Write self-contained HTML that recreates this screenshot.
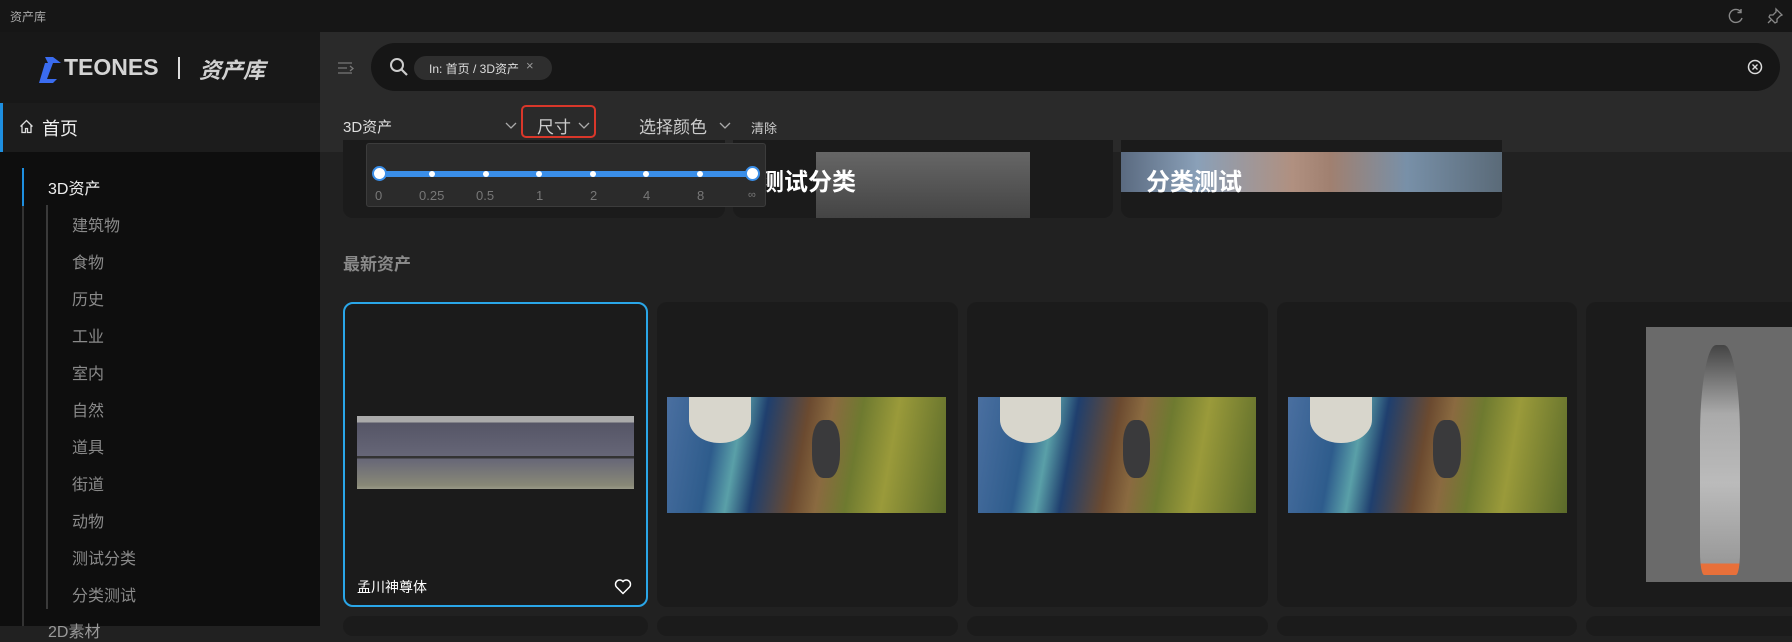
<!DOCTYPE html>
<html><head><meta charset="utf-8"><style>
*{margin:0;padding:0;box-sizing:border-box}
body{width:1792px;height:626px;overflow:hidden;background:#212121;font-family:"Liberation Sans","Noto Sans CJK SC",sans-serif;color:#ddd;position:relative}
.a{position:absolute}
.sub{position:absolute;left:72px;font-size:16px;color:#8a8a8a}
.card{position:absolute;background:#1b1b1b;border-radius:10px}
.bird{position:absolute;background:linear-gradient(100deg,#4a6fa0 0%,#2e5c8c 18%,#5aa0a8 26%,#1f3f6e 34%,#6b4a30 48%,#8a6a40 56%,#6e7a30 66%,#9a9a3a 78%,#5a6a2a 100%)}
.bird:before{content:"";position:absolute;left:8%;top:0;width:22%;height:40%;background:#d8d6cc;border-radius:0 0 50% 50%}
.bird:after{content:"";position:absolute;left:52%;top:20%;width:10%;height:50%;background:#3a3a3c;border-radius:40%}
</style></head><body>
<div class="a" style="left:0;top:0;width:1792px;height:32px;background:#161616"></div>
<div class="a" style="left:10px;top:8px;font-size:12px;color:#aaa">资产库</div>
<svg class="a" style="left:1727px;top:7px" width="18" height="18" viewBox="0 0 18 18"><path d="M14 5A6.5 6.5 0 1 0 15 11" fill="none" stroke="#888" stroke-width="1.4"/><path d="M14 2v3.5h-3.5" fill="none" stroke="#888" stroke-width="1.4"/></svg>
<svg class="a" style="left:1766px;top:7px" width="18" height="18" viewBox="0 0 18 18"><path d="M10 2l6 6-2 1-3 3 0 3-2 1-6-6 1-2 3 0 3-3z M5 13l-3 3" fill="none" stroke="#888" stroke-width="1.3"/></svg>
<div class="a" style="left:0;top:32px;width:320px;height:594px;background:#0e0e0e"></div>
<div class="a" style="left:0;top:32px;width:320px;height:120px;background:#181818"></div>
<div class="a" style="left:0;top:103px;width:320px;height:49px;background:#1c1c1c"></div>
<div class="a" style="left:0;top:103px;width:3px;height:49px;background:#1e8fe0"></div>
<svg class="a" style="left:37px;top:55px" width="26" height="28" viewBox="0 0 26 28"><path d="M2 8h9L8 2h8l8 6h-8l-6 16h10l-4 4H2l6-20H2z" fill="#3a6cf0"/></svg>
<div class="a" style="left:64px;top:54px;font-size:23px;font-weight:bold;color:#d4d4d4">TEONES</div>
<div class="a" style="left:178px;top:57px;width:2px;height:22px;background:#ddd"></div>
<div class="a" style="left:199px;top:53px;font-size:22px;font-weight:bold;font-style:italic;color:#d0d0d0">资产库</div>
<svg class="a" style="left:19px;top:119px" width="15" height="15" viewBox="0 0 15 15"><path d="M1.5 7.5L7.5 1.5l6 6M3 6v7.5h3.5V9.5h2v4H12V6" fill="none" stroke="#ddd" stroke-width="1.3"/></svg>
<div class="a" style="left:42px;top:115px;font-size:18px;color:#eee">首页</div>
<div class="a" style="left:22px;top:168px;width:2px;height:458px;background:#333"></div>
<div class="a" style="left:22px;top:168px;width:2px;height:38px;background:#1e8fe0"></div>
<div class="a" style="left:46px;top:205px;width:2px;height:404px;background:#3a3a3a"></div>
<div class="a" style="left:48px;top:175px;font-size:16px;color:#eee">3D资产</div>
<div class="sub" style="top:212px">建筑物</div>
<div class="sub" style="top:249px">食物</div>
<div class="sub" style="top:286px">历史</div>
<div class="sub" style="top:323px">工业</div>
<div class="sub" style="top:360px">室内</div>
<div class="sub" style="top:397px">自然</div>
<div class="sub" style="top:434px">道具</div>
<div class="sub" style="top:471px">街道</div>
<div class="sub" style="top:508px">动物</div>
<div class="sub" style="top:545px">测试分类</div>
<div class="sub" style="top:582px">分类测试</div>
<div class="a" style="left:48px;top:618px;font-size:16px;color:#999">2D素材</div>
<div class="a" style="left:320px;top:32px;width:1472px;height:120px;background:#2a2a2a"></div>
<svg class="a" style="left:337px;top:61px" width="18" height="16" viewBox="0 0 18 16"><path d="M1 2h14M1 7h9M1 12h14M13 5l3 2.5-3 2.5" fill="none" stroke="#777" stroke-width="1.3"/></svg>
<div class="a" style="left:371px;top:43px;width:1409px;height:48px;border-radius:24px;background:#161616"></div>
<svg class="a" style="left:389px;top:57px" width="20" height="20" viewBox="0 0 20 20"><circle cx="8" cy="8" r="6" fill="none" stroke="#ccc" stroke-width="2"/><path d="M12.5 12.5L18 18" stroke="#ccc" stroke-width="2.2"/></svg>
<div class="a" style="left:414px;top:56px;width:138px;height:24px;border-radius:12px;background:#2e2e2e"></div>
<div class="a" style="left:429px;top:60px;font-size:12px;color:#ddd">In: 首页 / 3D资产</div>
<div class="a" style="left:526px;top:58px;font-size:13px;color:#999">×</div>
<svg class="a" style="left:1747px;top:59px" width="16" height="16" viewBox="0 0 16 16"><circle cx="8" cy="8" r="6.5" fill="none" stroke="#ddd" stroke-width="1.5"/><path d="M5.5 5.5l5 5M10.5 5.5l-5 5" stroke="#ddd" stroke-width="1.4"/></svg>
<div class="a" style="left:343px;top:116px;font-size:15px;color:#ddd">3D资产</div>
<svg class="a" style="left:504px;top:121px" width="14" height="10" viewBox="0 0 14 10"><path d="M2 2l5 5 5-5" fill="none" stroke="#aaa" stroke-width="1.3"/></svg>
<div class="a" style="left:521px;top:105px;width:75px;height:33px;border:2px solid #d9372a;border-radius:5px"></div>
<div class="a" style="left:537px;top:113px;font-size:17px;color:#ccc">尺寸</div>
<svg class="a" style="left:577px;top:121px" width="14" height="10" viewBox="0 0 14 10"><path d="M2 2l5 5 5-5" fill="none" stroke="#aaa" stroke-width="1.3"/></svg>
<div class="a" style="left:639px;top:113px;font-size:17px;color:#ccc">选择颜色</div>
<svg class="a" style="left:718px;top:121px" width="14" height="10" viewBox="0 0 14 10"><path d="M2 2l5 5 5-5" fill="none" stroke="#aaa" stroke-width="1.3"/></svg>
<div class="a" style="left:751px;top:118px;font-size:13px;color:#ccc">清除</div>
<div class="card" style="left:343px;top:140px;width:382px;height:78px;border-radius:0 0 10px 10px"></div>
<div class="card" style="left:733px;top:140px;width:380px;height:78px;border-radius:0 0 10px 10px;overflow:hidden"><div class="a" style="left:83px;top:12px;width:214px;height:66px;background:linear-gradient(180deg,#666,#444)"></div><div class="a" style="left:27px;top:22px;font-size:24px;font-weight:bold;color:#fff">测试分类</div></div>
<div class="card" style="left:1121px;top:140px;width:381px;height:78px;border-radius:0 0 10px 10px;overflow:hidden"><div class="a" style="left:0;top:12px;width:381px;height:40px;background:linear-gradient(90deg,#5a6a80,#8aa0b8 20%,#b09080 45%,#a08070 55%,#7890a8 75%,#5a6a78)"></div><div class="a" style="left:25px;top:22px;font-size:24px;font-weight:bold;color:#fff">分类测试</div></div>
<div class="a" style="left:366px;top:143px;width:400px;height:64px;background:#2b2b2b;border:1px solid #3c3c3c;border-radius:3px"></div>
<div class="a" style="left:379px;top:171px;width:374px;height:6px;background:#3a8ee8;border-radius:3px"></div>
<div class="a" style="left:372px;top:166px;width:15px;height:15px;border-radius:50%;background:#fff;border:2px solid #3a8ee8"></div>
<div class="a" style="left:745px;top:166px;width:15px;height:15px;border-radius:50%;background:#fff;border:2px solid #3a8ee8"></div>
<div class="a" style="left:429px;top:171px;width:6px;height:6px;border-radius:50%;background:#fff"></div>
<div class="a" style="left:483px;top:171px;width:6px;height:6px;border-radius:50%;background:#fff"></div>
<div class="a" style="left:536px;top:171px;width:6px;height:6px;border-radius:50%;background:#fff"></div>
<div class="a" style="left:590px;top:171px;width:6px;height:6px;border-radius:50%;background:#fff"></div>
<div class="a" style="left:643px;top:171px;width:6px;height:6px;border-radius:50%;background:#fff"></div>
<div class="a" style="left:697px;top:171px;width:6px;height:6px;border-radius:50%;background:#fff"></div>
<div class="a" style="left:375px;top:188px;font-size:13px;color:#777">0</div>
<div class="a" style="left:419px;top:188px;font-size:13px;color:#777">0.25</div>
<div class="a" style="left:476px;top:188px;font-size:13px;color:#777">0.5</div>
<div class="a" style="left:536px;top:188px;font-size:13px;color:#777">1</div>
<div class="a" style="left:590px;top:188px;font-size:13px;color:#777">2</div>
<div class="a" style="left:643px;top:188px;font-size:13px;color:#777">4</div>
<div class="a" style="left:697px;top:188px;font-size:13px;color:#777">8</div>
<div class="a" style="left:748px;top:189px;font-size:11px;color:#777">∞</div>
<div class="a" style="left:343px;top:250px;font-size:17px;font-weight:bold;color:#8a8a8a">最新资产</div>
<div class="card" style="left:343px;top:302px;width:305px;height:305px;border:2px solid #2aa6e8"></div>
<div class="a" style="left:357px;top:416px;width:277px;height:73px;background:linear-gradient(180deg,#aaa 0,#aaa 9%,#556 9%,#667 55%,#333 55%,#333 58%,#667 58%,#887 95%,#998 100%)"></div>
<div class="a" style="left:357px;top:577px;font-size:14px;color:#fff">孟川神尊体</div>
<svg class="a" style="left:614px;top:578px" width="18" height="17" viewBox="0 0 18 17"><path d="M9 15.5L2.5 9A3.8 3.8 0 0 1 9 3.5 3.8 3.8 0 0 1 15.5 9z" fill="none" stroke="#fff" stroke-width="1.5"/></svg>
<div class="card" style="left:657px;top:302px;width:301px;height:305px"></div>
<div class="bird" style="left:667px;top:397px;width:279px;height:116px"></div>
<div class="card" style="left:967px;top:302px;width:301px;height:305px"></div>
<div class="bird" style="left:978px;top:397px;width:278px;height:116px"></div>
<div class="card" style="left:1277px;top:302px;width:300px;height:305px"></div>
<div class="bird" style="left:1288px;top:397px;width:279px;height:116px"></div>
<div class="card" style="left:1586px;top:302px;width:220px;height:305px"></div>
<div class="a" style="left:1646px;top:327px;width:146px;height:255px;background:#6a6a6a"></div>
<div class="a" style="left:1700px;top:345px;width:40px;height:230px;background:linear-gradient(180deg,#444,#aaa 30%,#bbb 60%,#999 95%,#e8703a 95%);border-radius:40% 40% 10% 10%"></div>
<div class="card" style="left:343px;top:616px;width:305px;height:20px"></div>
<div class="card" style="left:657px;top:616px;width:301px;height:20px"></div>
<div class="card" style="left:967px;top:616px;width:301px;height:20px"></div>
<div class="card" style="left:1277px;top:616px;width:300px;height:20px"></div>
<div class="card" style="left:1586px;top:616px;width:220px;height:20px"></div>
</body></html>
